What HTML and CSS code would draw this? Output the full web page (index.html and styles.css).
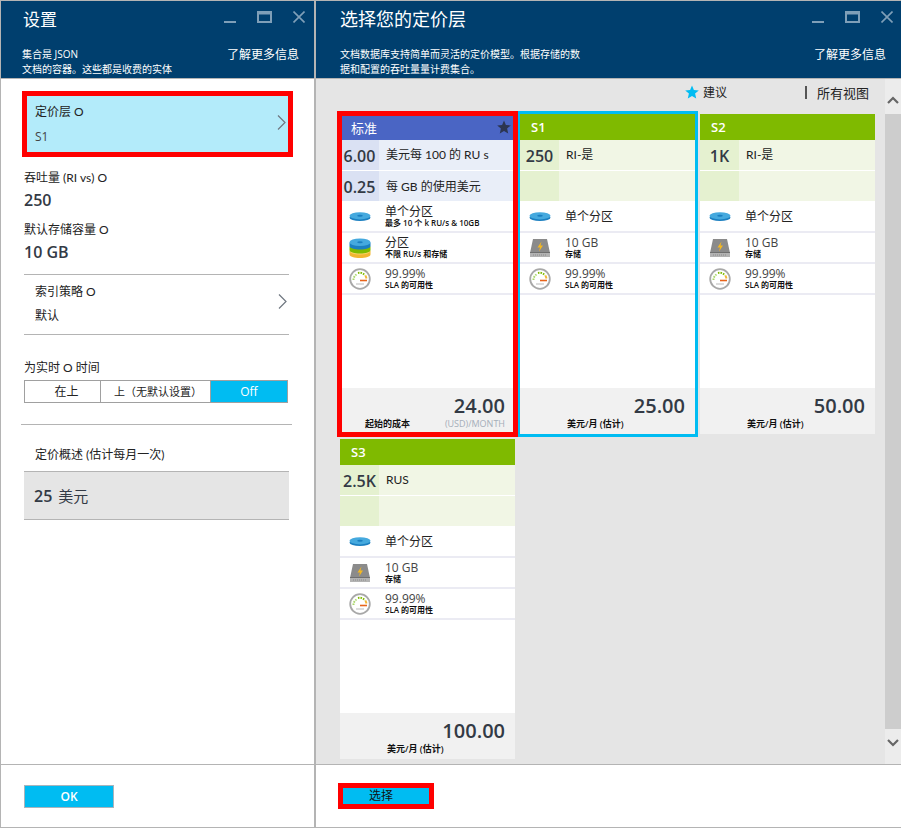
FILE: index.html
```html
<!DOCTYPE html>
<html lang="zh-CN">
<head>
  <meta charset="UTF-8" />
  <title>选择您的定价层</title>
  <link rel="stylesheet" href="styles.css">
</head>
<body>
  <svg class="defs" width="0" height="0">
    <symbol id="i-disk" viewBox="0 0 22 22">
      <ellipse cx="11" cy="12.500" rx="10.500" ry="3.600" fill="#1b7fc0"/>
      <ellipse cx="11" cy="10.800" rx="10.500" ry="3.600" fill="#45a9de"/>
      <ellipse cx="11" cy="10.800" rx="2.800" ry="1" fill="#1b7fc0"/>
    </symbol>
    <symbol id="i-stack" viewBox="0 0 22 22">
      <path d="M.5 14v3.500c0 2 4.700 3.500 10.500 3.500s10.500-1.500 10.500-3.500V14z" fill="#f2b632"/>
      <ellipse cx="11" cy="14" rx="10.500" ry="3.500" fill="#fbd46a"/>
      <path d="M.5 9.500V13c0 2 4.700 3.500 10.500 3.500s10.500-1.500 10.500-3.500V9.500z" fill="#7fba00"/>
      <path d="M.5 5.500V9c0 2 4.700 3.500 10.500 3.500S21.500 11 21.500 9V5.500z" fill="#1b7fc0"/>
      <ellipse cx="11" cy="5.300" rx="10.500" ry="3.800" fill="#45a9de"/>
      <ellipse cx="11" cy="5.300" rx="2.800" ry="1" fill="#1b7fc0"/>
    </symbol>
    <symbol id="i-hdd" viewBox="0 0 22 22">
      <path d="M4 2h14l3 14H1z" fill="#8b8b8b"/>
      <rect x="1" y="15" width="20" height="5" fill="#b3b3b3"/>
      <path d="M1 15h20v1H1z" fill="#6f6f6f"/>
      <path d="M12.500 4.500 8.500 10.500h2.500l-1 4 4-6h-2.500z" fill="#f5b81f"/>
      <path d="M4 18h14" stroke="#8b8b8b" stroke-dasharray="1 1"/>
    </symbol>
    <symbol id="i-gauge" viewBox="0 0 22 22">
      <circle cx="11" cy="11" r="9.800" fill="#fff" stroke="#a8a8a8" stroke-width="1.800"/>
      <path d="M4.500 12a6.500 6.500 0 0 1 3-5.500" fill="none" stroke="#a9d66a" stroke-width="2" stroke-dasharray="1.500 1"/>
      <path d="M9 5a6.500 6.500 0 0 1 7 2.500" fill="none" stroke="#7fba00" stroke-width="2" stroke-dasharray="1.500 1"/>
      <path d="M16.500 7.500l1 3" stroke="#f2b632" stroke-width="2"/>
      <path d="M11 12.500h7" stroke="#e8641b" stroke-width="1.600"/>
      <path d="M7 16h8" stroke="#d0d0d0" stroke-width="1.500"/>
    </symbol>
  </svg>

  <div class="window">
    <section class="blade blade-left">
      <header class="blade-head">
        <div class="head-top">
          <h1 class="title title-small">设置</h1>
          <div class="win-btns">
            <svg width="12" height="12" viewBox="0 0 12 12"><path d="M0 11h12" stroke="#7f9fb8" stroke-width="2"/></svg>
            <svg width="15" height="12" viewBox="0 0 15 12"><path d="M1 1h13v10H1z" fill="none" stroke="#7f9fb8" stroke-width="2"/><path d="M0 2.500h15" stroke="#7f9fb8" stroke-width="2"/></svg>
            <svg width="12" height="12" viewBox="0 0 12 12"><path d="M.5.500l11 11M11.500.500l-11 11" stroke="#7f9fb8" stroke-width="1.600"/></svg>
          </div>
        </div>
        <div class="head-bottom">
          <p class="desc">集合是 JSON<br>文档的容器。这些都是收费的实体</p>
          <a class="more">了解更多信息</a>
        </div>
      </header>

      <div class="settings">
        <div class="tier-pick">
          <div>
            <div class="lbl">定价层 O</div>
            <div class="tier-val">S1</div>
          </div>
          <svg class="chev" width="9" height="15" viewBox="0 0 9 15"><path d="M1 .5l7 7-7 7" fill="none" stroke="#6f7780" stroke-width="1.200"/></svg>
        </div>

        <div class="field field-first">
          <div class="lbl">吞吐量 (RI vs) O</div>
          <div class="big">250</div>
        </div>
        <div class="field">
          <div class="lbl">默认存储容量 O</div>
          <div class="big">10 GB</div>
        </div>

        <div class="policy">
          <div>
            <div class="lbl">索引策略 O</div>
            <div class="lbl policy-val">默认</div>
          </div>
          <svg class="chev" width="9" height="15" viewBox="0 0 9 15"><path d="M1 .5l7 7-7 7" fill="none" stroke="#6f7780" stroke-width="1.200"/></svg>
        </div>

        <div class="lbl rt-lbl">为实时 O 时间</div>
        <div class="toggle">
          <span class="opt opt-a">在上</span>
          <span class="opt opt-b">上（无默认设置）</span>
          <span class="opt opt-c">Off</span>
        </div>

        <div class="summary-line"></div>
        <div class="lbl summary-lbl">定价概述 (估计每月一次)</div>
        <div class="summary"><b>25</b>美元</div>
      </div>

      <footer class="blade-foot">
        <button class="btn-ok">OK</button>
      </footer>
    </section>

    <section class="blade blade-right">
      <header class="blade-head">
        <div class="head-top">
          <h1 class="title">选择您的定价层</h1>
          <div class="win-btns">
            <svg width="12" height="12" viewBox="0 0 12 12"><path d="M0 11h12" stroke="#7f9fb8" stroke-width="2"/></svg>
            <svg width="15" height="12" viewBox="0 0 15 12"><path d="M1 1h13v10H1z" fill="none" stroke="#7f9fb8" stroke-width="2"/><path d="M0 2.500h15" stroke="#7f9fb8" stroke-width="2"/></svg>
            <svg width="12" height="12" viewBox="0 0 12 12"><path d="M.5.500l11 11M11.500.500l-11 11" stroke="#7f9fb8" stroke-width="1.600"/></svg>
          </div>
        </div>
        <div class="head-bottom">
          <p class="desc">文档数据库支持简单而灵活的定价模型。根据存储的数<br>据和配置的吞吐量量计费集合。</p>
          <a class="more">了解更多信息</a>
        </div>
      </header>

      <div class="picker">
        <div class="picker-main">
          <div class="toolbar">
            <svg width="14" height="14" viewBox="0 0 14 14"><path d="M7 .5l1.900 4.500 4.900.4-3.700 3.200 1.100 4.800L7 10.900l-4.200 2.500 1.100-4.800L.2 5.400l4.900-.4z" fill="#00bcf2"/></svg>
            <span class="rec">建议</span>
            <span class="sep"></span>
            <span class="all">所有视图</span>
          </div>

          <div class="cards">
            <article class="card card-blue outline-red">
              <div class="card-head">标准<svg class="fav" width="14" height="14" viewBox="0 0 14 14"><path d="M7 .5l1.900 4.500 4.900.4-3.700 3.200 1.100 4.800L7 10.900l-4.200 2.500 1.100-4.800L.2 5.400l4.900-.4z" fill="#2c3550"/></svg></div>
              <div class="stat"><span class="num">6.00</span><span class="stat-txt">美元每 100 的 RU s</span></div>
              <div class="stat"><span class="num">0.25</span><span class="stat-txt">每 GB 的使用美元</span></div>
              <div class="row"><svg class="ico"><use href="#i-disk"/></svg><div><div class="row-t">单个分区</div><div class="row-s">最多 10 个 k RU/s &amp; 10GB</div></div></div>
              <div class="row"><svg class="ico"><use href="#i-stack"/></svg><div><div class="row-t">分区</div><div class="row-s">不限 RU/s 和存储</div></div></div>
              <div class="row"><svg class="ico"><use href="#i-gauge"/></svg><div><div class="row-m">99.99%</div><div class="row-s">SLA 的可用性</div></div></div>
              <div class="fill"></div>
              <div class="price">
                <div class="amount">24.00</div>
                <div class="price-sub"><span class="unit">起始的成本</span><span class="cur">(USD)/MONTH</span></div>
              </div>
            </article>

            <article class="card card-green outline-blue">
              <div class="card-head">S1</div>
              <div class="stat"><span class="num">250</span><span class="stat-txt">RI-是</span></div>
              <div class="stat"><span class="num"></span><span class="stat-txt"></span></div>
              <div class="row"><svg class="ico"><use href="#i-disk"/></svg><div class="row-t">单个分区</div></div>
              <div class="row"><svg class="ico"><use href="#i-hdd"/></svg><div><div class="row-m">10 GB</div><div class="row-s">存储</div></div></div>
              <div class="row"><svg class="ico"><use href="#i-gauge"/></svg><div><div class="row-m">99.99%</div><div class="row-s">SLA 的可用性</div></div></div>
              <div class="fill"></div>
              <div class="price">
                <div class="amount">25.00</div>
                <div class="price-sub"><span class="unit">美元/月 (估计)</span></div>
              </div>
            </article>

            <article class="card card-green">
              <div class="card-head">S2</div>
              <div class="stat"><span class="num">1K</span><span class="stat-txt">RI-是</span></div>
              <div class="stat"><span class="num"></span><span class="stat-txt"></span></div>
              <div class="row"><svg class="ico"><use href="#i-disk"/></svg><div class="row-t">单个分区</div></div>
              <div class="row"><svg class="ico"><use href="#i-hdd"/></svg><div><div class="row-m">10 GB</div><div class="row-s">存储</div></div></div>
              <div class="row"><svg class="ico"><use href="#i-gauge"/></svg><div><div class="row-m">99.99%</div><div class="row-s">SLA 的可用性</div></div></div>
              <div class="fill"></div>
              <div class="price">
                <div class="amount">50.00</div>
                <div class="price-sub"><span class="unit">美元/月 (估计)</span></div>
              </div>
            </article>

            <article class="card card-green">
              <div class="card-head">S3</div>
              <div class="stat"><span class="num">2.5K</span><span class="stat-txt">RUS</span></div>
              <div class="stat"><span class="num"></span><span class="stat-txt"></span></div>
              <div class="row"><svg class="ico"><use href="#i-disk"/></svg><div class="row-t">单个分区</div></div>
              <div class="row"><svg class="ico"><use href="#i-hdd"/></svg><div><div class="row-m">10 GB</div><div class="row-s">存储</div></div></div>
              <div class="row"><svg class="ico"><use href="#i-gauge"/></svg><div><div class="row-m">99.99%</div><div class="row-s">SLA 的可用性</div></div></div>
              <div class="fill"></div>
              <div class="price">
                <div class="amount">100.00</div>
                <div class="price-sub"><span class="unit">美元/月 (估计)</span></div>
              </div>
            </article>
          </div>
        </div>

        <div class="scrollbar">
          <div class="sb-btn sb-up"><svg width="12" height="8" viewBox="0 0 12 8"><path d="M1 7l5-5 5 5" fill="none" stroke="#666" stroke-width="2.200"/></svg></div>
          <div class="sb-track"></div>
          <div class="sb-btn sb-down"><svg width="12" height="8" viewBox="0 0 12 8"><path d="M1 1l5 5 5-5" fill="none" stroke="#666" stroke-width="2.200"/></svg></div>
        </div>
      </div>

      <footer class="blade-foot">
        <button class="btn-select">选择</button>
      </footer>
    </section>
  </div>
</body>
</html>
```

FILE: styles.css
```css
* { margin: 0; padding: 0; box-sizing: border-box; }
html, body { width: 901px; height: 828px; overflow: hidden; background: #fff; }
body { font-family: "Open Sans", "Noto Sans CJK SC", sans-serif; color: #222; }
.defs { display: block; height: 0; }

.window {
  display: flex;
  width: 901px;
  height: 828px;
  border-top: 1px solid #b4b4b4;
  border-left: 1px solid #b4b4b4;
  border-bottom: 1px solid #b4b4b4;
}
.blade { display: flex; flex-direction: column; }
.blade-left { width: 315px; border-right: 2px solid #b4b4b4; }
.blade-right { flex: 1; min-width: 0; }

/* blade header */
.blade-head {
  flex: none;
  height: 78px;
  background: #003f6e;
  border-bottom: 1px solid #b4b4b4;
  color: #fff;
  display: flex;
  flex-direction: column;
  justify-content: space-between;
  padding: 0 15px 1px 21px;
}
.blade-right .blade-head { padding: 0 15px 1px 24px; }
.head-top { display: flex; justify-content: space-between; align-items: flex-start; }
.title { font-size: 18px; font-weight: 400; line-height: 24px; margin-top: 6px; }
.title-small { font-size: 17px; margin-left: 1px; margin-top: 7px; }
.win-btns { display: flex; gap: 21px; margin-top: 10px; margin-right: -6px; }
.blade-right .win-btns { margin-right: -7px; }
.head-bottom { display: flex; justify-content: space-between; align-items: flex-start; }
.desc { font-size: 10px; line-height: 15px; }
.more { font-size: 12px; line-height: 16px; }

/* settings column */
.settings { flex: 1; padding: 0 24px 0 23px; min-height: 0; }
.lbl { font-family: "Lato", "Noto Sans CJK SC", sans-serif; font-size: 12px; line-height: 16px; color: #222; }
.chev { margin-top: -4px; }
.tier-pick {
  display: flex;
  justify-content: space-between;
  align-items: center;
  margin: 12px 0 0 -2px;
  width: 271px;
  height: 66px;
  background: #b3ebfa;
  border: 5px solid #f00;
  padding: 0 2px 0 8px;
}
.tier-val { font-size: 12px; line-height: 16px; margin-top: 9px; color: #444; }
.field { margin-top: 11px; }
.field-first { margin-top: 13px; }
.big { font-size: 16px; font-weight: 600; line-height: 22px; color: #333a45; margin-top: 3px; }
.policy {
  display: flex;
  justify-content: space-between;
  align-items: center;
  width: 265px;
  height: 61px;
  margin-top: 11px;
  padding: 0 2px 2px 11px;
  border-top: 1px solid #b4b4b4;
  border-bottom: 1px solid #b4b4b4;
}
.policy-val { margin-top: 8px; }
.rt-lbl { margin-top: 25px; }
.toggle { display: flex; width: 264px; height: 23px; margin-top: 4px; }
.opt {
  font-size: 11px;
  line-height: 21px;
  text-align: center;
  border: 1px solid #a0a0a0;
  color: #222;
}
.opt-a { width: 76px; border-right: 0; padding-left: 8px; font-size: 12px; }
.opt-b { width: 111px; padding-left: 5px; }
.opt-c { width: 77px; border-left: 0; background: #00bcf2; color: #fff; font-size: 12px; }
.summary-line { width: 271px; height: 1px; margin: 21px 0 0 -3px; background: #b4b4b4; }
.summary-lbl { margin: 22px 0 0 11px; }
.summary {
  width: 265px;
  height: 49px;
  margin-top: 8px;
  padding-left: 10px;
  background: #e5e5e5;
  border-top: 1px solid #b4b4b4;
  border-bottom: 1px solid #b4b4b4;
  font-size: 15px;
  line-height: 49px;
  color: #333a45;
}
.summary b { font-size: 16px; font-weight: 600; margin-right: 6px; }

/* footers */
.blade-foot {
  flex: none;
  height: 63px;
  border-top: 1px solid #b4b4b4;
  background: #fff;
  display: flex;
  align-items: center;
  padding-left: 23px;
}
.blade-right .blade-foot { padding-left: 22px; }
.btn-ok {
  width: 90px;
  height: 23px;
  background: #00bcf2;
  border: 1px solid #a8b4bc;
  color: #fff;
  font: 600 12px "Open Sans", sans-serif;
}
.btn-select {
  width: 96px;
  height: 26px;
  background: #00bcf2;
  border: 5px solid #f00;
  padding-right: 10px;
  color: #111;
  font: 12px/14px "Open Sans", "Noto Sans CJK SC", sans-serif;
}

/* pricing picker */
.picker { flex: 1; display: flex; min-height: 0; }
.picker-main { flex: 1; min-width: 0; background: #e5e5e5; }
.toolbar {
  height: 35px;
  display: flex;
  align-items: center;
  padding: 0 16px 9px 0;
  justify-content: flex-end;
}
.rec { font-size: 12px; margin-left: 4px; }
.sep { width: 2px; height: 13px; background: #555; margin-left: 78px; }
.all { font-size: 13px; margin-left: 10px; }

.cards {
  display: grid;
  grid-template-columns: repeat(3, 175px);
  grid-auto-rows: 320px;
  gap: 5px;
  padding-left: 24px;
}
.card { display: flex; flex-direction: column; background: #fff; position: relative; }
.outline-red { outline: 5px solid #f00; outline-offset: -2px; z-index: 1; }
.outline-blue { outline: 3px solid #00bcf2; }
.card-head {
  flex: none;
  height: 26px;
  display: flex;
  justify-content: space-between;
  align-items: center;
  padding: 0 4px 0 11px;
  color: #fff;
  font-size: 13px;
  font-weight: 600;
}
.card-blue .card-head { background: #4a65c4; font-weight: 400; }
.card-green .card-head { background: #7fba00; }
.stat { flex: none; display: flex; height: 31px; border-bottom: 1px solid #fff; }
.stat + .stat { height: 30px; border-bottom: 0; }
.num {
  flex: none;
  width: 39px;
  text-align: center;
  font-size: 16px;
  font-weight: 600;
  line-height: 33px;
  color: #333a45;
  white-space: nowrap;
}
.stat-txt {
  flex: 1;
  font-family: "Lato", "Noto Sans CJK SC", sans-serif;
  font-size: 12px;
  line-height: 29px;
  padding-left: 7px;
  color: #222;
}
.stat + .stat .stat-txt { line-height: 31px; }
.card-blue .num { background: #dae1f3; }
.card-blue .stat-txt { background: #e9eef8; }
.card-green .num { background: #e5f1d0; }
.card-green .stat-txt { background: #f1f6e5; }

.row {
  flex: none;
  height: 31px;
  display: flex;
  align-items: center;
  padding-left: 9px;
  border-bottom: 2px solid #ebebf3;
}
.stat + .row { height: 32px; }
.ico { flex: none; width: 22px; height: 22px; margin-right: 14px; }
.row-t { font-size: 12px; line-height: 13px; color: #222; }
.row-m { font-size: 12px; line-height: 13px; color: #444; }
.row-s { font-size: 8px; font-weight: 600; line-height: 10px; color: #111; white-space: nowrap; }
.fill { flex: 1; }
.price { flex: none; height: 46px; background: #f1f1f1; padding: 5px 10px 0 0; text-align: right; }
.amount { font-size: 20px; font-weight: 600; line-height: 26px; margin-bottom: -1px; color: #333a45; }
.price-sub { display: flex; justify-content: space-between; align-items: baseline; text-align: left; line-height: 12px; padding-left: 47px; }
.unit { font-size: 9px; font-weight: 600; color: #111; }
.card-blue .price-sub { padding-left: 25px; }
.cur { font-size: 9px; color: #a5aeb9; }

/* scrollbar */
.scrollbar { flex: none; width: 16px; display: flex; flex-direction: column; background: #e5e5e5; }
.sb-btn { flex: none; height: 35px; display: flex; align-items: center; justify-content: center; background: #ececec; }
.sb-up { padding-top: 7px; }
.sb-down { padding-bottom: 8px; }
.sb-track { flex: 1; background: #cdcdcd; }
```
